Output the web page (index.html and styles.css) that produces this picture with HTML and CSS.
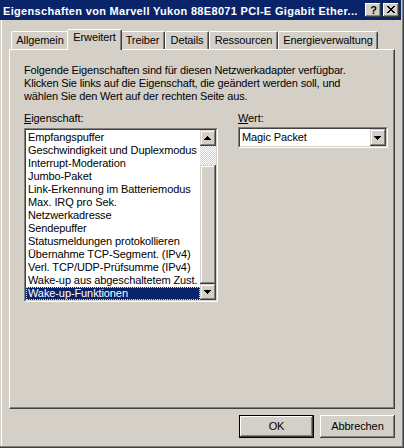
FILE: index.html
```html
<!DOCTYPE html>
<html lang="de">
<head>
<meta charset="utf-8">
<title>Eigenschaften</title>
<link rel="stylesheet" href="styles.css">
</head>
<body>
<div class="window">
  <div class="frame">
    <div class="caption">
      <span class="caption-title">Eigenschaften von Marvell Yukon 88E8071 PCI-E Gigabit Ether...</span>
      <div class="caption-buttons">
        <span class="cbtn cbtn-help">?</span>
        <span class="cbtn cbtn-close">
          <svg width="16" height="14" viewBox="0 0 16 14" shape-rendering="crispEdges">
            <g fill="#000">
              <rect x="4" y="3" width="2" height="1"/><rect x="10" y="3" width="2" height="1"/>
              <rect x="5" y="4" width="2" height="1"/><rect x="9" y="4" width="2" height="1"/>
              <rect x="6" y="5" width="4" height="1"/>
              <rect x="7" y="6" width="2" height="1"/>
              <rect x="6" y="7" width="4" height="1"/>
              <rect x="5" y="8" width="2" height="1"/><rect x="9" y="8" width="2" height="1"/>
              <rect x="4" y="9" width="2" height="1"/><rect x="10" y="9" width="2" height="1"/>
            </g>
          </svg>
        </span>
      </div>
    </div>
    <div class="body">
      <div class="tabs">
        <div class="tab tab-allgemein">Allgemein</div>
        <div class="tab tab-erweitert tab-active">Erweitert</div>
        <div class="tab tab-treiber">Treiber</div>
        <div class="tab tab-details">Details</div>
        <div class="tab tab-ressourcen">Ressourcen</div>
        <div class="tab tab-energie">Energieverwaltung</div>
      </div>
      <div class="panel">
        <p class="intro">Folgende Eigenschaften sind für diesen Netzwerkadapter verfügbar.<br>Klicken Sie links auf die Eigenschaft, die geändert werden soll, und<br>wählen Sie den Wert auf der rechten Seite aus.</p>
        <div class="fields">
          <div class="field field-left">
            <div class="label"><u>E</u>igenschaft:</div>
            <div class="listbox">
              <div class="listbox-inner">
                <ul class="items">
                  <li>Empfangspuffer</li>
                  <li>Geschwindigkeit und Duplexmodus</li>
                  <li>Interrupt-Moderation</li>
                  <li>Jumbo-Paket</li>
                  <li>Link-Erkennung im Batteriemodus</li>
                  <li>Max. IRQ pro Sek.</li>
                  <li>Netzwerkadresse</li>
                  <li>Sendepuffer</li>
                  <li>Statusmeldungen protokollieren</li>
                  <li>Übernahme TCP-Segment. (IPv4)</li>
                  <li>Verl. TCP/UDP-Prüfsumme (IPv4)</li>
                  <li>Wake-up aus abgeschaltetem Zust.</li>
                  <li class="item-selected">Wake-up-Funktionen</li>
                </ul>
                <div class="vscroll">
                  <div class="sb-btn">
                    <svg width="16" height="16" viewBox="0 0 16 16" shape-rendering="crispEdges"><g fill="#000"><rect x="7" y="6" width="1" height="1"/><rect x="6" y="7" width="3" height="1"/><rect x="5" y="8" width="5" height="1"/><rect x="4" y="9" width="7" height="1"/></g></svg>
                  </div>
                  <div class="sb-track"></div>
                  <div class="sb-thumb"></div>
                  <div class="sb-btn">
                    <svg width="16" height="16" viewBox="0 0 16 16" shape-rendering="crispEdges"><g fill="#000"><rect x="4" y="6" width="7" height="1"/><rect x="5" y="7" width="5" height="1"/><rect x="6" y="8" width="3" height="1"/><rect x="7" y="9" width="1" height="1"/></g></svg>
                  </div>
                </div>
              </div>
            </div>
          </div>
          <div class="field field-right">
            <div class="label"><u>W</u>ert:</div>
            <div class="combo">
              <div class="combo-inner">
                <span class="combo-text">Magic Packet</span>
                <span class="combo-btn">
                  <svg width="16" height="17" viewBox="0 0 16 17" shape-rendering="crispEdges"><g fill="#000"><rect x="4" y="7" width="7" height="1"/><rect x="5" y="8" width="5" height="1"/><rect x="6" y="9" width="3" height="1"/><rect x="7" y="10" width="1" height="1"/></g></svg>
                </span>
              </div>
            </div>
          </div>
        </div>
      </div>
      <div class="buttons">
        <button class="btn btn-default" type="button">OK</button>
        <button class="btn" type="button">Abbrechen</button>
      </div>
    </div>
  </div>
</div>
</body>
</html>
```
FILE: styles.css
```css
html, body {
  margin: 0;
  padding: 0;
  background: #d4d0c8;
}

body {
  font-family: "Liberation Sans", Arial, sans-serif;
  font-size: 11px;
  line-height: 13px;
  letter-spacing: -0.1px;
  color: #000;
}

.window {
  width: 404px;
  height: 448px;
  box-sizing: border-box;
  background: #d4d0c8;
  border-right: 1px solid #404040;
  border-bottom: 1px solid #404040;
}

.frame {
  height: 100%;
  box-sizing: border-box;
  border-right: 1px solid #808080;
  border-bottom: 1px solid #808080;
  display: flex;
  flex-direction: column;
}

/* Title bar */
.caption {
  height: 20px;
  margin-right: 1px;
  background: #0a246a;
  display: flex;
  align-items: center;
  flex: none;
}

.caption-title {
  flex: 1;
  min-width: 0;
  padding-left: 3px;
  padding-top: 1px;
  color: #fff;
  font-weight: bold;
  font-size: 11px;
  line-height: 18px;
  letter-spacing: 0.32px;
  white-space: nowrap;
  overflow: hidden;
}

.caption-buttons {
  display: flex;
  gap: 2px;
  margin-right: 2px;
}

.cbtn {
  width: 16px;
  height: 14px;
  box-sizing: border-box;
  background: #d4d0c8;
  box-shadow: inset -1px -1px #404040, inset 1px 1px #fff, inset -2px -2px #808080, inset 2px 2px #d4d0c8;
  display: flex;
  align-items: center;
  justify-content: center;
}

.cbtn-help {
  font-weight: bold;
  font-size: 11px;
  line-height: 14px;
  padding-left: 1px;
}

.cbtn-close svg {
  display: block;
}

/* Dialog body */
.body {
  flex: 1;
  margin-left: 1px;
  border-left: 1px solid #fff;
  padding: 9px 7px 0 7px;
  display: flex;
  flex-direction: column;
}

/* Tabs */
.tabs {
  height: 21px;
  margin-bottom: -1px;
  padding-left: 2px;
  display: flex;
  align-items: flex-end;
  position: relative;
  z-index: 1;
}

.tab {
  height: 18px;
  box-sizing: border-box;
  margin-bottom: 1px;
  padding-top: 2px;
  text-align: center;
  white-space: nowrap;
  background: #d4d0c8;
  border-top: 1px solid #fff;
  border-left: 1px solid #fff;
  border-right: 1px solid #404040;
  border-radius: 2px 2px 0 0;
  box-shadow: inset -1px 0 #808080;
}

.tab-allgemein { width: 58px; }
.tab-erweitert { width: 51px; }
.tab-treiber { width: 45px; }
.tab-details { width: 44px; }
.tab-ressourcen { width: 69px; }
.tab-energie { width: 100px; }

.tab-active {
  width: 55px;
  height: 21px;
  margin: 0 -2px;
  padding-top: 1px;
  position: relative;
  z-index: 2;
}

/* Panel */
.panel {
  height: 360px;
  box-sizing: border-box;
  border-top: 1px solid #fff;
  border-left: 1px solid #fff;
  border-right: 1px solid #404040;
  border-bottom: 1px solid #404040;
  box-shadow: inset -1px -1px #808080;
  padding: 14px 5px 0 14px;
}

.intro {
  margin: 0;
  white-space: nowrap;
  letter-spacing: -0.15px;
}

.fields {
  display: flex;
  gap: 20px;
  margin-top: 9px;
}

.field-left { width: 194px; }
.field-right { width: 150px; }

.label {
  height: 13px;
}

.label u {
  text-decoration: underline;
  text-underline-offset: 1px;
}

/* List box */
.listbox {
  margin-top: 3px;
  border: 1px solid;
  border-color: #808080 #fff #fff #808080;
}

.listbox-inner {
  border: 1px solid;
  border-color: #404040 #d4d0c8 #d4d0c8 #404040;
  background: #fff;
  display: flex;
}

.items {
  flex: 1;
  min-width: 0;
  list-style: none;
  margin: 0;
  padding: 1px 0 0 0;
}

.items li {
  height: 13px;
  padding-left: 2px;
  white-space: nowrap;
  overflow: hidden;
}

.items .item-selected {
  background: #0a246a;
  color: #fff;
  outline: 1px dotted #f5db95;
  outline-offset: -1px;
}

.vscroll {
  width: 16px;
  display: flex;
  flex-direction: column;
}

.sb-btn {
  height: 16px;
  flex: none;
  background: #d4d0c8;
  box-shadow: inset -1px -1px #404040, inset 1px 1px #d4d0c8, inset -2px -2px #808080, inset 2px 2px #fff;
}

.sb-btn svg, .combo-btn svg {
  display: block;
}

.sb-track {
  height: 19px;
  flex: none;
  background: repeating-conic-gradient(#d4d0c8 0 25%, #fff 0 50%) 0 0 / 2px 2px;
}

.sb-thumb {
  flex: 1;
  background: #d4d0c8;
  box-shadow: inset -1px -1px #404040, inset 1px 1px #d4d0c8, inset -2px -2px #808080, inset 2px 2px #fff;
}

/* Combo box */
.combo {
  margin-top: 2px;
  border: 1px solid;
  border-color: #808080 #fff #fff #808080;
}

.combo-inner {
  height: 17px;
  border: 1px solid;
  border-color: #404040 #d4d0c8 #d4d0c8 #404040;
  background: #fff;
  display: flex;
}

.combo-text {
  flex: 1;
  padding: 2px 0 0 2px;
  white-space: nowrap;
}

.combo-btn {
  width: 16px;
  height: 17px;
  background: #d4d0c8;
  box-shadow: inset -1px -1px #404040, inset 1px 1px #d4d0c8, inset -2px -2px #808080, inset 2px 2px #fff;
}

/* Push buttons */
.buttons {
  display: flex;
  justify-content: flex-end;
  gap: 6px;
  margin-top: 6px;
}

.btn {
  width: 75px;
  height: 23px;
  margin: 0;
  padding: 0;
  border: none;
  background: #d4d0c8;
  font-family: "Liberation Sans", Arial, sans-serif;
  font-size: 11px;
  line-height: 13px;
  letter-spacing: -0.1px;
  color: #000;
  box-shadow: inset -1px -1px #404040, inset 1px 1px #fff, inset -2px -2px #808080, inset 2px 2px #d4d0c8;
}

.btn-default {
  box-shadow: inset 0 0 0 1px #000, inset -2px -2px #404040, inset 2px 2px #fff, inset -3px -3px #808080;
}
```
